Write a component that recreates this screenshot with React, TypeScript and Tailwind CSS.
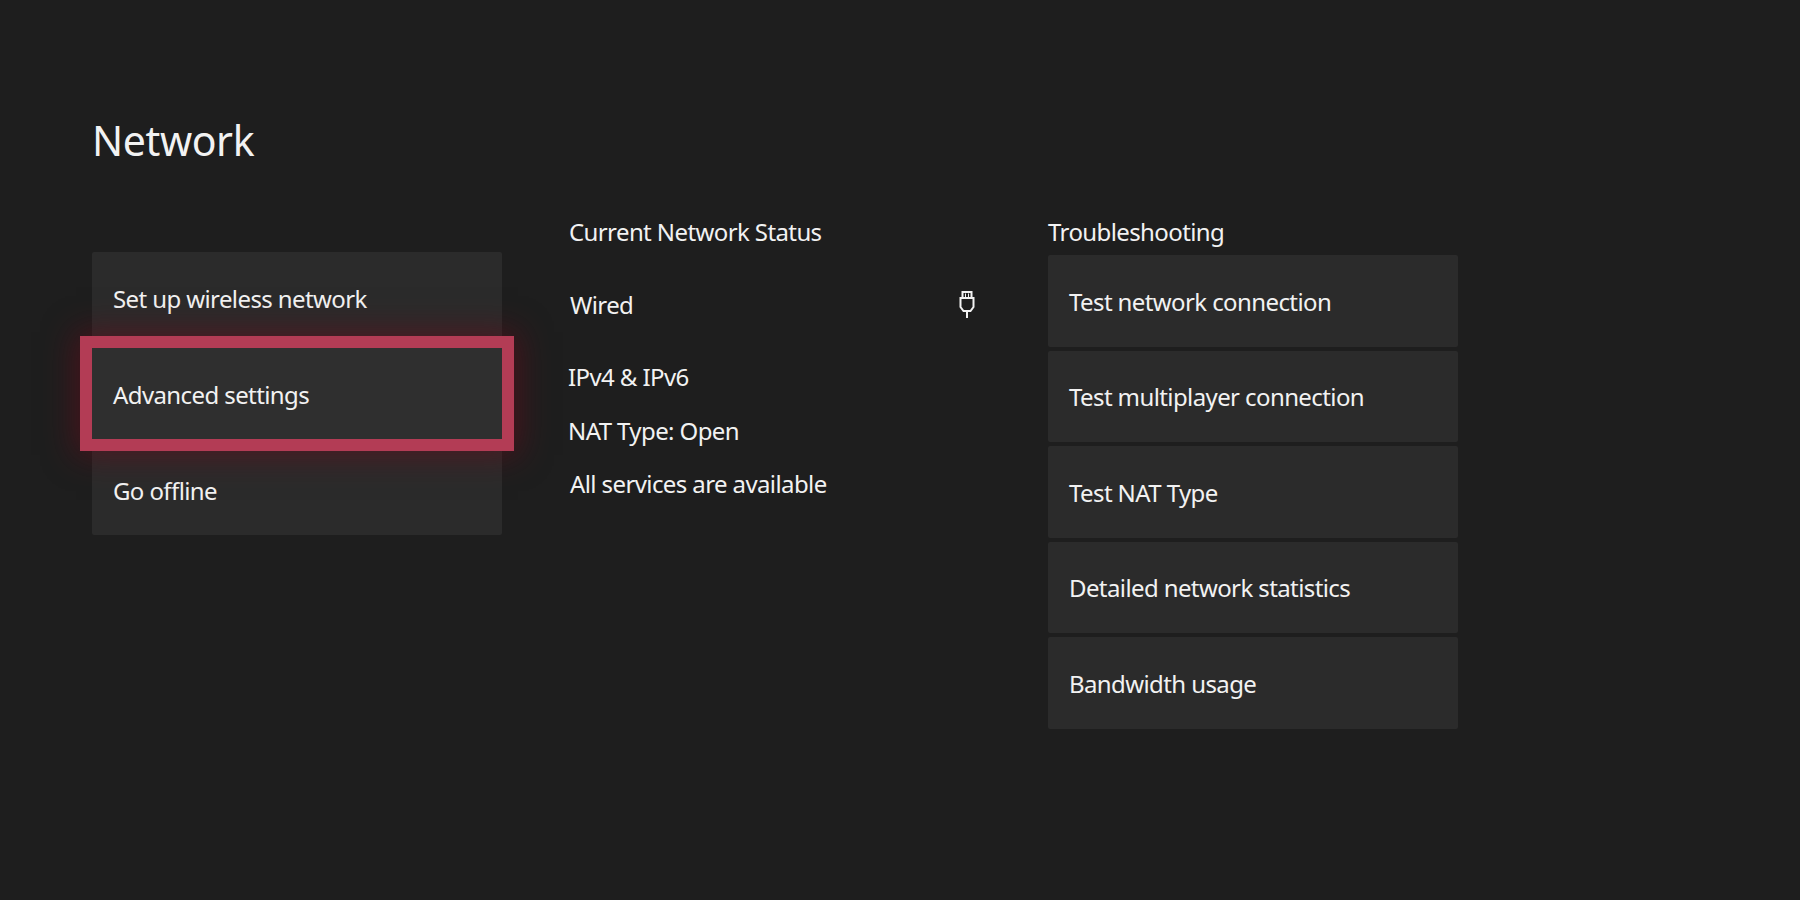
const font = "font-['Noto_Sans',sans-serif]";

const left = ["Set up wireless network", "Advanced settings", "Go offline"];
const right = [
  "Test network connection",
  "Test multiplayer connection",
  "Test NAT Type",
  "Detailed network statistics",
  "Bandwidth usage",
];

function WiredIcon() {
  return (
    <svg width="16" height="28" viewBox="0 0 16 28" fill="none" stroke="#f2f2f2" strokeWidth="2">
      <path d="M3.500 1h9v6h2v9l-3 4h-7l-3-4V7h2z" strokeLinejoin="miter" />
      <path d="M3.500 7h9" />
      <path d="M6.500 2.500v4M9.500 2.500v4" strokeWidth="1" />
      <path d="M8 20v7" />
    </svg>
  );
}

export default function App() {
  return (
    <div className={`${font} w-[1800px] h-[900px] overflow-hidden bg-[#1e1e1e] text-[#f2f2f2] text-[24px] leading-[32px] tracking-[-0.6px] pl-[92px] pt-[112px]`}>
      <h1 className="text-[41px] leading-[56px] h-[56px] tracking-[-0.4px]">Network</h1>
      <div className="flex mt-[84px]">
        <div className="w-[410px] bg-[#2b2b2b] flex flex-col h-[283px] rounded-[2px]">
          {left.map((t, i) => (
            <div
              key={t}
              className={
                i === 1
                  ? "relative z-10 h-[91px] flex items-center pl-[21px] pt-[2px] bg-[#2f2f2f] shadow-[0_0_0_12px_#b33c55,0_0_30px_16px_rgba(110,10,25,0.55)]"
                  : i === 0
                  ? "h-[96px] flex items-center pl-[21px] pb-[2px]"
                  : "h-[96px] flex items-center pl-[21px] pt-[7px]"
              }
            >
              {t}
            </div>
          ))}
        </div>

        <div className="ml-[67px] w-[411px] -mt-[36px] flex flex-col">
          <div className="h-[32px]">Current Network Status</div>
          <div className="mt-[41px] h-[32px] flex items-center justify-between pl-[1px] pr-[5px]">
            <span>Wired</span>
            <WiredIcon />
          </div>
          <div className="mt-[40px] h-[32px] -ml-[1px]">IPv4 &amp; IPv6</div>
          <div className="mt-[22px] h-[32px] -ml-[1px]">NAT Type: Open</div>
          <div className="mt-[21px] h-[32px] pl-[1px]">All services are available</div>
        </div>

        <div className="ml-[68px] w-[410px] -mt-[36px] flex flex-col">
          <div className="h-[32px]">Troubleshooting</div>
          <div className="mt-[7px] flex flex-col gap-[4px]">
            {right.map((t) => (
              <div key={t} className="h-[91.5px] bg-[#2b2b2b] flex items-center pl-[21px] pt-[2px] rounded-[2px]">
                {t}
              </div>
            ))}
          </div>
        </div>
      </div>
    </div>
  );
}
